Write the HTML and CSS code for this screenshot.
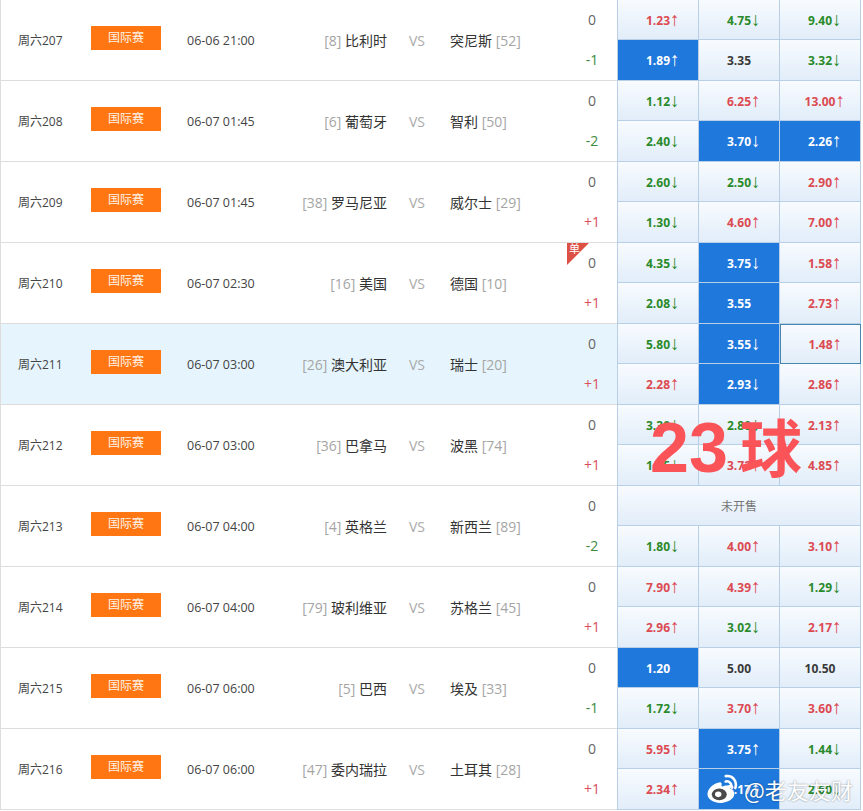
FILE: index.html

```html
<!DOCTYPE html>
<html lang="zh-CN">
<head>
  <meta charset="UTF-8" />
  <meta name="viewport" content="width=device-width, initial-scale=1.0"/>
  <title>竞彩足球</title>
  <link rel="stylesheet" href="styles.css">
</head>
<body>

<div class="table">

  <div class="row">
    <div class="info">
      <div class="week">周六207</div>
      <div class="league"><span class="tag">国际赛</span></div>
      <div class="time">06-06 21:00</div>
      <div class="home"><span class="rank">[8]</span> 比利时</div>
      <div class="vs">VS</div>
      <div class="away">突尼斯 <span class="rank">[52]</span></div>
      <div class="handicap"><span>0</span><span class="minus">-1</span></div>
    </div>
    <div class="odds">
      <div class="cell"><span class="num up">1.23<i>↑</i></span></div>
      <div class="cell"><span class="num down">4.75<i>↓</i></span></div>
      <div class="cell"><span class="num down">9.40<i>↓</i></span></div>
      <div class="cell on"><span class="num">1.89<i>↑</i></span></div>
      <div class="cell"><span class="num">3.35</span></div>
      <div class="cell"><span class="num down">3.32<i>↓</i></span></div>
    </div>
  </div>

  <div class="row">
    <div class="info">
      <div class="week">周六208</div>
      <div class="league"><span class="tag">国际赛</span></div>
      <div class="time">06-07 01:45</div>
      <div class="home"><span class="rank">[6]</span> 葡萄牙</div>
      <div class="vs">VS</div>
      <div class="away">智利 <span class="rank">[50]</span></div>
      <div class="handicap"><span>0</span><span class="minus">-2</span></div>
    </div>
    <div class="odds">
      <div class="cell"><span class="num down">1.12<i>↓</i></span></div>
      <div class="cell"><span class="num up">6.25<i>↑</i></span></div>
      <div class="cell"><span class="num up">13.00<i>↑</i></span></div>
      <div class="cell"><span class="num down">2.40<i>↓</i></span></div>
      <div class="cell on"><span class="num">3.70<i>↓</i></span></div>
      <div class="cell on"><span class="num">2.26<i>↑</i></span></div>
    </div>
  </div>

  <div class="row">
    <div class="info">
      <div class="week">周六209</div>
      <div class="league"><span class="tag">国际赛</span></div>
      <div class="time">06-07 01:45</div>
      <div class="home"><span class="rank">[38]</span> 罗马尼亚</div>
      <div class="vs">VS</div>
      <div class="away">威尔士 <span class="rank">[29]</span></div>
      <div class="handicap"><span>0</span><span class="plus">+1</span></div>
    </div>
    <div class="odds">
      <div class="cell"><span class="num down">2.60<i>↓</i></span></div>
      <div class="cell"><span class="num down">2.50<i>↓</i></span></div>
      <div class="cell"><span class="num up">2.90<i>↑</i></span></div>
      <div class="cell"><span class="num down">1.30<i>↓</i></span></div>
      <div class="cell"><span class="num up">4.60<i>↑</i></span></div>
      <div class="cell"><span class="num up">7.00<i>↑</i></span></div>
    </div>
  </div>

  <div class="row">
    <div class="info">
      <div class="week">周六210</div>
      <div class="league"><span class="tag">国际赛</span></div>
      <div class="time">06-07 02:30</div>
      <div class="home"><span class="rank">[16]</span> 美国</div>
      <div class="vs">VS</div>
      <div class="away">德国 <span class="rank">[10]</span></div>
      <div class="handicap"><b class="single"><em>单</em></b><span>0</span><span class="plus">+1</span></div>
    </div>
    <div class="odds">
      <div class="cell"><span class="num down">4.35<i>↓</i></span></div>
      <div class="cell on"><span class="num">3.75<i>↓</i></span></div>
      <div class="cell"><span class="num up">1.58<i>↑</i></span></div>
      <div class="cell"><span class="num down">2.08<i>↓</i></span></div>
      <div class="cell on"><span class="num">3.55</span></div>
      <div class="cell"><span class="num up">2.73<i>↑</i></span></div>
    </div>
  </div>

  <div class="row hover">
    <div class="info">
      <div class="week">周六211</div>
      <div class="league"><span class="tag">国际赛</span></div>
      <div class="time">06-07 03:00</div>
      <div class="home"><span class="rank">[26]</span> 澳大利亚</div>
      <div class="vs">VS</div>
      <div class="away">瑞士 <span class="rank">[20]</span></div>
      <div class="handicap"><span>0</span><span class="plus">+1</span></div>
    </div>
    <div class="odds">
      <div class="cell"><span class="num down">5.80<i>↓</i></span></div>
      <div class="cell on"><span class="num">3.55<i>↓</i></span></div>
      <div class="cell picked"><span class="num up">1.48<i>↑</i></span></div>
      <div class="cell"><span class="num up">2.28<i>↑</i></span></div>
      <div class="cell on"><span class="num">2.93<i>↓</i></span></div>
      <div class="cell"><span class="num up">2.86<i>↑</i></span></div>
    </div>
  </div>

  <div class="row">
    <div class="info">
      <div class="week">周六212</div>
      <div class="league"><span class="tag">国际赛</span></div>
      <div class="time">06-07 03:00</div>
      <div class="home"><span class="rank">[36]</span> 巴拿马</div>
      <div class="vs">VS</div>
      <div class="away">波黑 <span class="rank">[74]</span></div>
      <div class="handicap"><span>0</span><span class="plus">+1</span></div>
    </div>
    <div class="odds">
      <div class="cell"><span class="num down">3.30<i>↓</i></span></div>
      <div class="cell"><span class="num down">2.80<i>↓</i></span></div>
      <div class="cell"><span class="num up">2.13<i>↑</i></span></div>
      <div class="cell"><span class="num down">1.85<i>↓</i></span></div>
      <div class="cell"><span class="num up">3.72<i>↑</i></span></div>
      <div class="cell"><span class="num up">4.85<i>↑</i></span></div>
    </div>
  </div>

  <div class="row">
    <div class="info">
      <div class="week">周六213</div>
      <div class="league"><span class="tag">国际赛</span></div>
      <div class="time">06-07 04:00</div>
      <div class="home"><span class="rank">[4]</span> 英格兰</div>
      <div class="vs">VS</div>
      <div class="away">新西兰 <span class="rank">[89]</span></div>
      <div class="handicap"><span>0</span><span class="minus">-2</span></div>
    </div>
    <div class="odds">
      <div class="cell closed">未开售</div>
      <div class="cell"><span class="num down">1.80<i>↓</i></span></div>
      <div class="cell"><span class="num up">4.00<i>↑</i></span></div>
      <div class="cell"><span class="num up">3.10<i>↑</i></span></div>
    </div>
  </div>

  <div class="row">
    <div class="info">
      <div class="week">周六214</div>
      <div class="league"><span class="tag">国际赛</span></div>
      <div class="time">06-07 04:00</div>
      <div class="home"><span class="rank">[79]</span> 玻利维亚</div>
      <div class="vs">VS</div>
      <div class="away">苏格兰 <span class="rank">[45]</span></div>
      <div class="handicap"><span>0</span><span class="plus">+1</span></div>
    </div>
    <div class="odds">
      <div class="cell"><span class="num up">7.90<i>↑</i></span></div>
      <div class="cell"><span class="num up">4.39<i>↑</i></span></div>
      <div class="cell"><span class="num down">1.29<i>↓</i></span></div>
      <div class="cell"><span class="num up">2.96<i>↑</i></span></div>
      <div class="cell"><span class="num down">3.02<i>↓</i></span></div>
      <div class="cell"><span class="num up">2.17<i>↑</i></span></div>
    </div>
  </div>

  <div class="row">
    <div class="info">
      <div class="week">周六215</div>
      <div class="league"><span class="tag">国际赛</span></div>
      <div class="time">06-07 06:00</div>
      <div class="home"><span class="rank">[5]</span> 巴西</div>
      <div class="vs">VS</div>
      <div class="away">埃及 <span class="rank">[33]</span></div>
      <div class="handicap"><span>0</span><span class="minus">-1</span></div>
    </div>
    <div class="odds">
      <div class="cell on"><span class="num">1.20</span></div>
      <div class="cell"><span class="num">5.00</span></div>
      <div class="cell"><span class="num">10.50</span></div>
      <div class="cell"><span class="num down">1.72<i>↓</i></span></div>
      <div class="cell"><span class="num up">3.70<i>↑</i></span></div>
      <div class="cell"><span class="num up">3.60<i>↑</i></span></div>
    </div>
  </div>

  <div class="row">
    <div class="info">
      <div class="week">周六216</div>
      <div class="league"><span class="tag">国际赛</span></div>
      <div class="time">06-07 06:00</div>
      <div class="home"><span class="rank">[47]</span> 委内瑞拉</div>
      <div class="vs">VS</div>
      <div class="away">土耳其 <span class="rank">[28]</span></div>
      <div class="handicap"><span>0</span><span class="plus">+1</span></div>
    </div>
    <div class="odds">
      <div class="cell"><span class="num up">5.95<i>↑</i></span></div>
      <div class="cell on"><span class="num">3.75<i>↑</i></span></div>
      <div class="cell"><span class="num down">1.44<i>↓</i></span></div>
      <div class="cell"><span class="num up">2.34<i>↑</i></span></div>
      <div class="cell on"><span class="num">3.17<i>↑</i></span></div>
      <div class="cell"><span class="num down">2.60<i>↓</i></span></div>
    </div>
  </div>

</div>

<div class="stamp">23<span>球</span></div>

<div class="watermark">
  <svg class="weibo" width="33" height="30" viewBox="0 0 30 28">
    <path d="M12 8C6 9 1 14 1 19c0 5 6 8 12 8 7 0 13-4 13-8 0-3-3-4-4-4 1-3-1-5-5-4-2 1-3 1-3 0 1-3-1-4-2-3z" fill="#fff"/>
    <ellipse cx="12" cy="19" rx="7" ry="5.5" fill="#4a4a4a"/>
    <ellipse cx="11" cy="19" rx="3" ry="2.6" fill="#fff"/>
    <path d="M18 2c6-1 11 4 9 11M18 7c3-1 6 2 5 5" fill="none" stroke="#fff" stroke-width="2.4" stroke-linecap="round"/>
  </svg>
  <span>@老友友财</span>
</div>

</body>
</html>
```

FILE: styles.css

```css
body {
  margin: 0;
  padding: 0;
  background: #fff;
  font-family: "Open Sans", "Noto Sans CJK SC", sans-serif;
  font-size: 12px;
  color: #444;
  position: relative;
  overflow: hidden;
  height: 811px;
}

.table {
  width: 861px;
  border-left: 1px solid #ddd;
}

.row {
  display: flex;
  height: 81px;
}

.row.hover .info {
  background: #e6f5fd;
}

.info {
  display: flex;
  align-items: center;
  width: 616px;
  box-sizing: border-box;
  border-bottom: 1px solid #ddd;
}

.week {
  width: 90px;
  padding-left: 17px;
  box-sizing: border-box;
}

.league {
  width: 96px;
}

.tag {
  display: block;
  width: 70px;
  height: 24px;
  line-height: 23px;
  margin-top: -5px;
  background: #ff7612;
  color: #fff4e8;
  text-align: center;
}

.time {
  width: 100px;
  font-size: 12.5px;
}

.home {
  width: 100px;
  text-align: right;
  font-size: 14px;
  color: #333;
}

.rank {
  color: #a5a5a5;
  font-size: 14px;
}

.vs {
  width: 63px;
  padding-left: 22px;
  box-sizing: border-box;
  font-size: 14px;
  color: #aaa;
}

.away {
  width: 117px;
  font-size: 14px;
  color: #333;
}

.handicap {
  position: relative;
  flex: 1;
  align-self: stretch;
  display: flex;
  flex-direction: column;
  font-size: 14px;
  color: #666;
  text-align: center;
  padding-left: 0;
}

.handicap span {
  height: 40px;
  line-height: 40px;
}

.minus {
  color: #3c8a3c;
}

.plus {
  color: #d9505a;
}

.single {
  position: absolute;
  left: 0;
  top: 0;
  width: 22px;
  height: 22px;
  background: #dd5044;
  clip-path: polygon(0 0, 100% 0, 0 100%);
  font-weight: normal;
}

.single em {
  display: block;
  font-style: normal;
  font-size: 11px;
  line-height: 12px;
  color: #fff;
  padding-left: 2px;
  text-align: left;
}

.odds {
  display: grid;
  grid-template-columns: repeat(3, 81px);
  grid-template-rows: 40px 41px;
  width: 244px;
  border-left: 1px solid #b8cfe6;
}

.cell {
  box-sizing: border-box;
  display: flex;
  align-items: center;
  justify-content: center;
  padding-top: 1px;
  border-right: 1px solid #b8cfe6;
  border-bottom: 1px solid #b8cfe6;
  background: linear-gradient(#f8fbff, #e1edf9);
}

.cell.on {
  background: #1f78dc;
}

.cell.on .num {
  color: #fff;
}

.cell.picked {
  border: 1px solid #4a85b0;
}

.cell.closed {
  grid-column: 1 / 4;
  color: #777;
}

.num {
  position: relative;
  font-weight: 700;
  color: #3a3a3a;
}

.num i {
  position: absolute;
  left: 100%;
  top: -1px;
  font-style: normal;
  font-weight: 400;
  font-size: 19px;
  line-height: 18px;
  font-family: "Liberation Sans", sans-serif;
}

.up {
  color: #dc4a52;
}

.down {
  color: #2a8a2a;
}

.stamp {
  position: absolute;
  left: 650px;
  top: 400px;
  font-family: "Liberation Sans", sans-serif;
  font-size: 70px;
  font-weight: 700;
  line-height: 90px;
  color: #fb5458;
}

.stamp span {
  font-family: "Noto Sans CJK SC", sans-serif;
  font-size: 62px;
  margin-left: 12px;
}

.watermark {
  position: absolute;
  left: 706px;
  top: 774px;
  display: flex;
  align-items: center;
  gap: 5px;
  color: #fff;
  font-family: "Noto Sans CJK SC", sans-serif;
  font-size: 22px;
  line-height: 30px;
  text-shadow: 0 0 2px rgba(0, 0, 0, 0.45);
}
```
